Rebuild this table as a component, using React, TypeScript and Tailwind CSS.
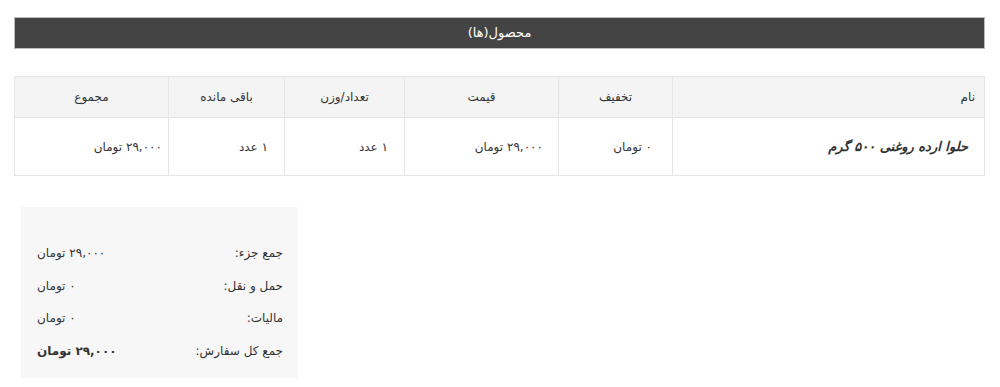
export default function App() {
  const font = { fontFamily: '"DejaVu Sans", "Noto Sans", sans-serif' };
  const rows = [
    { label: "جمع جزء:", value: "۲۹,۰۰۰ تومان", bold: false },
    { label: "حمل و نقل:", value: "۰ تومان", bold: false },
    { label: "مالیات:", value: "۰ تومان", bold: false },
    { label: "جمع کل سفارش:", value: "۲۹,۰۰۰ تومان", bold: true },
  ];

  return (
    <div dir="rtl" className="w-[1000px] h-[387px] bg-white text-[#333] text-[12px] overflow-hidden font-['DejaVu_Sans',sans-serif]">
      <div className="pt-[17px] pr-[15px] pl-[14px]">
        {/* title bar */}
        <div className="h-[32px] bg-[#444] border border-[#bbb] flex items-center justify-center text-white text-[13px]">
          محصول(ها)
        </div>

        {/* products table */}
        <table className="mt-[27px] w-full border-collapse table-fixed border border-[#e6e6e6]">
          <colgroup>
            <col className="w-[312px]" />
            <col className="w-[114px]" />
            <col className="w-[154px]" />
            <col className="w-[120px]" />
            <col className="w-[116px]" />
            <col />
          </colgroup>
          <thead>
            <tr className="h-[41px] bg-[#f4f4f4]">
              <th className="border border-[#e6e6e6] font-normal text-right pr-[9px]">نام</th>
              <th className="border border-[#e6e6e6] font-normal">تخفیف</th>
              <th className="border border-[#e6e6e6] font-normal">قیمت</th>
              <th className="border border-[#e6e6e6] font-normal">تعداد/وزن</th>
              <th className="border border-[#e6e6e6] font-normal">باقی مانده</th>
              <th className="border border-[#e6e6e6] font-normal">مجموع</th>
            </tr>
          </thead>
          <tbody>
            <tr className="h-[58px]">
              <td className="border border-[#e6e6e6] pr-[16px] font-bold italic text-[13px]">حلوا ارده روغنی ۵۰۰ گرم</td>
              <td className="border border-[#e6e6e6] pr-[20px]">۰ تومان</td>
              <td className="border border-[#e6e6e6] pr-[15px]">۲۹,۰۰۰ تومان</td>
              <td className="border border-[#e6e6e6] pr-[16px]">۱ عدد</td>
              <td className="border border-[#e6e6e6] pr-[16px]">۱ عدد</td>
              <td className="border border-[#e6e6e6] pr-[6px]">۲۹,۰۰۰ تومان</td>
            </tr>
          </tbody>
        </table>

        {/* totals */}
        <div className="flex justify-end mt-[31px] ml-[7px]">
          <div className="w-[277px] h-[171px] bg-[#f7f7f7] pt-[30px] pr-[15px] pl-[16px]" style={font}>
            {rows.map((r) => (
              <div key={r.label} className="h-[32.6px] flex items-center justify-between">
                <span>{r.label}</span>
                <span className={r.bold ? "font-bold" : ""}>{r.value}</span>
              </div>
            ))}
          </div>
        </div>
      </div>
    </div>
  );
}
